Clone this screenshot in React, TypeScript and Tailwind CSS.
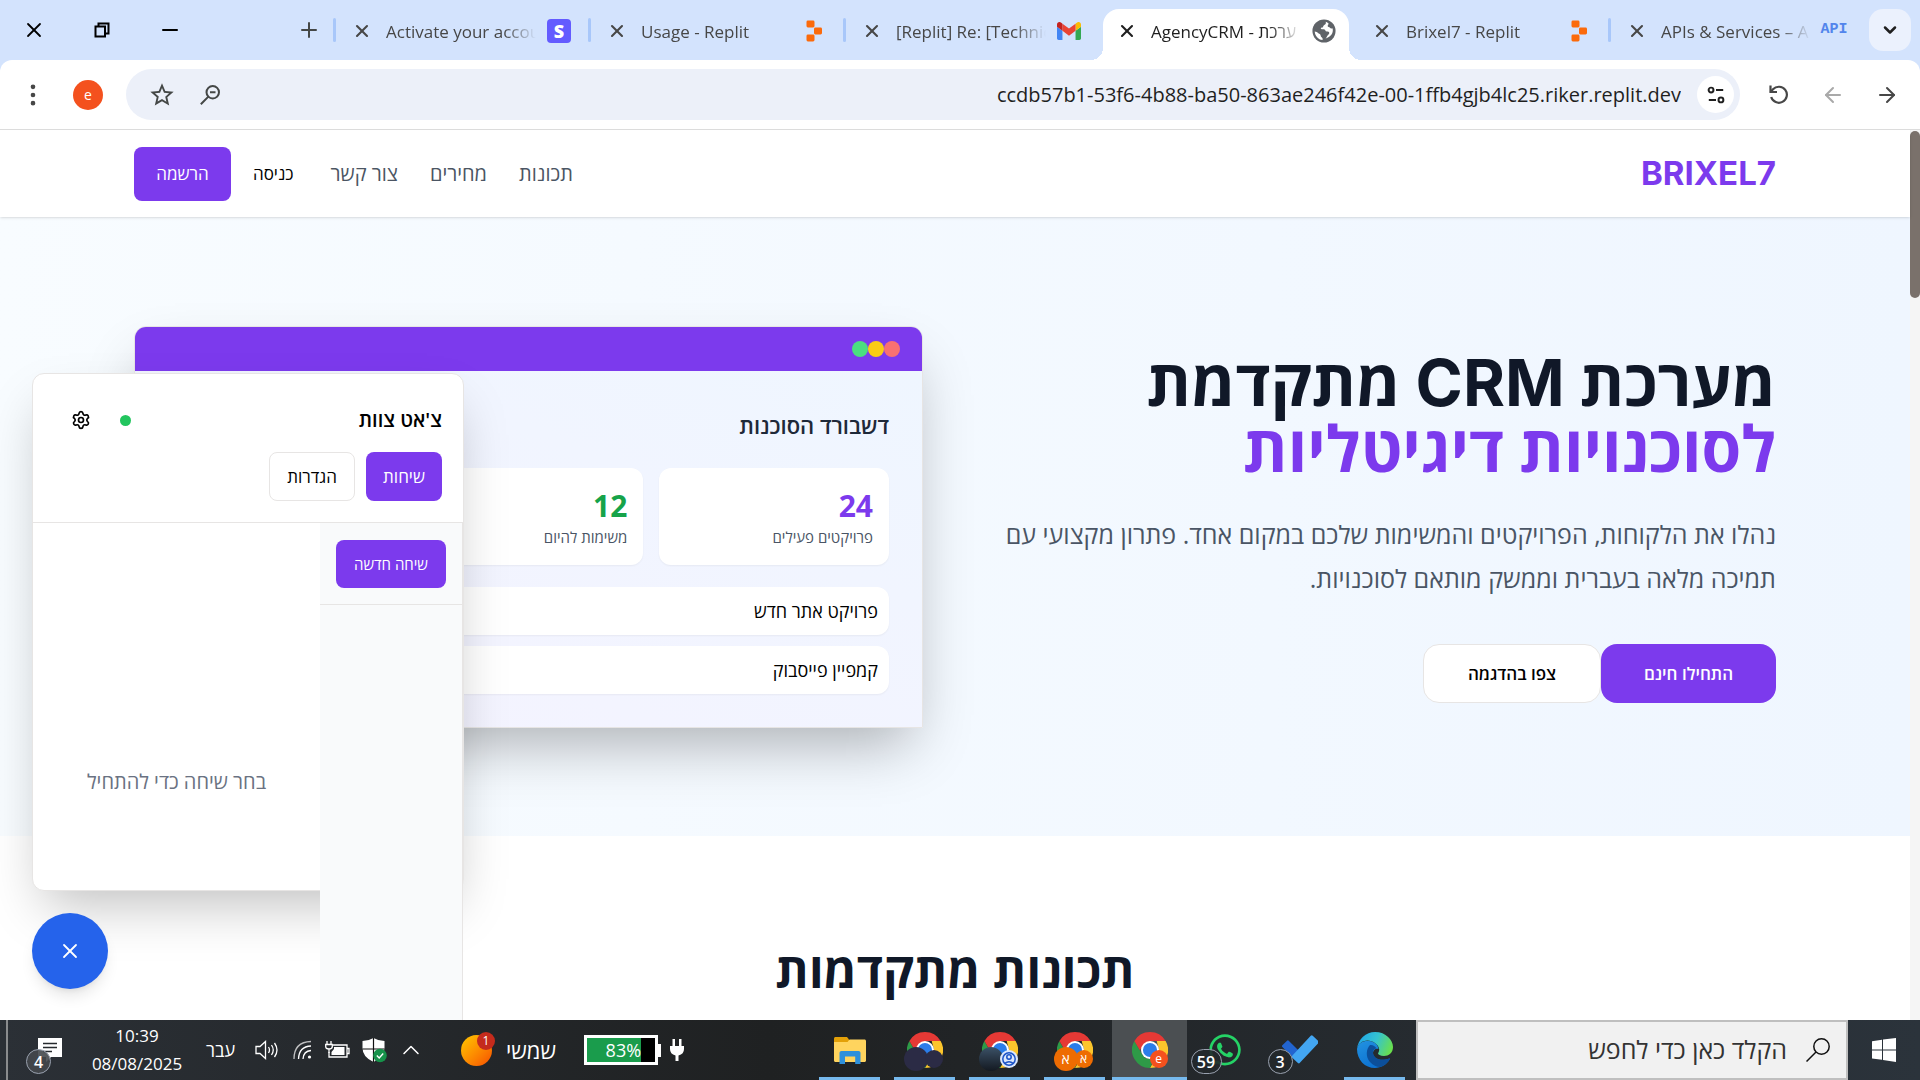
import React from "react";
import { ArrowLeft, ArrowRight, ChevronDown, ChevronUp, Minus, MoreVertical, Plus, Settings, X } from "lucide-react";
import { FaWhatsapp } from "react-icons/fa";

type IconProps = { className?: string };

function ReplitIcon({ className }: IconProps) {
  return (
    <svg viewBox="0 0 16 22" className={className} fill="#fb6a0b" aria-hidden="true">
      <rect x="0.5" y="0.5" width="8" height="7" rx="1.4" />
      <rect x="8" y="7.5" width="8" height="7" rx="1.4" />
      <rect x="0.5" y="14.5" width="8" height="7" rx="1.4" />
    </svg>
  );
}

function GmailIcon({ className }: IconProps) {
  return (
    <svg viewBox="52 42 88 66" className={className} aria-hidden="true">
      <path fill="#4285f4" d="M58 108h14V74L52 59v43c0 3.32 2.69 6 6 6" />
      <path fill="#34a853" d="M120 108h14c3.32 0 6-2.69 6-6V59l-20 15" />
      <path fill="#fbbc04" d="M120 48v26l20-15v-8c0-7.42-8.47-11.65-14.4-7.2" />
      <path fill="#ea4335" d="M72 74V48l24 18 24-18v26L96 92" />
      <path fill="#c5221f" d="M52 51v8l20 15V48l-5.6-4.2c-5.94-4.45-14.4-.22-14.4 7.2" />
    </svg>
  );
}

function GlobeIcon({ className }: IconProps) {
  return (
    <svg viewBox="0 0 22 22" className={className} aria-hidden="true">
      <circle cx="11" cy="11" r="10.6" fill="#5f6368" />
      <path fill="#fff" d="M12.6 2.6c.4 1.6-.2 2.6-1.6 3.1-.9.4-.4 1.6-1.4 2-.8.3-1.7.1-1.5 1 .2.9 1.4.6 2.5.6 1.7 0 1.4 2 3 2.2 1.2.1 2 .1 2.2 1.2.2 1-.8 1.6-1.5 2.4-.9 1-.7 2.1-1.9 2.7 3.6-.6 6.7-3.6 6.7-7.4 0-.7-.1-1.3-.3-1.9-.9.4-2 .2-2.5-.6-.4-.7-1.7-.3-1.9-1.2-.2-1.2.9-1.7.8-2.6-.7-.7-1.6-1.2-2.6-1.5zM2.5 11.4c.3 4.2 3.2 7.3 7.2 7.9.2-1.2-.1-2-.9-2.5-.9-.5-.7-1.7-1.2-2.6-.5-.8-1.4-.7-2-1.4-.6-.8-1.8-1.2-3.1-1.4z" />
    </svg>
  );
}

function TuneIcon({ className }: IconProps) {
  return (
    <svg viewBox="0 0 20 22" className={className} fill="none" stroke="#1f1f1f" strokeWidth="2.2" aria-hidden="true">
      <circle cx="4.5" cy="5.5" r="2.7" />
      <path d="M10 5.5h8M2 16.5h8" />
      <circle cx="15.5" cy="16.5" r="2.7" />
    </svg>
  );
}

function StarIcon({ className }: IconProps) {
  return (
    <svg viewBox="0 0 24 24" className={className} fill="#444746" aria-hidden="true">
      <path d="M22 9.24l-7.19-.62L12 2 9.19 8.63 2 9.24l5.46 4.73L5.82 21 12 17.27 18.18 21l-1.63-7.03L22 9.24zM12 15.4l-3.76 2.27 1-4.28-3.32-2.88 4.38-.38L12 6.1l1.71 4.04 4.38.38-3.32 2.88 1 4.28L12 15.4z" />
    </svg>
  );
}

function ZoomOutIcon({ className }: IconProps) {
  return (
    <svg viewBox="0 0 24 24" className={className} fill="none" stroke="#444746" strokeWidth="2.2" aria-hidden="true">
      <circle cx="15" cy="9" r="6.8" />
      <path d="M10.2 13.8L2 22M12 9h6" />
    </svg>
  );
}

function ReloadIcon({ className }: IconProps) {
  return (
    <svg viewBox="0 0 24 24" className={className} fill="none" stroke="#474747" strokeWidth="2.2" aria-hidden="true">
      <path d="M4.2 14a8 8 0 1 0 1.8-7.7L3.5 9" />
      <path d="M3.5 2.5V9H10" />
    </svg>
  );
}

function SearchIcon({ className }: IconProps) {
  return (
    <svg viewBox="0 0 24 24" className={className} fill="none" stroke="#111" strokeWidth="1.5" aria-hidden="true">
      <circle cx="15.5" cy="8.5" r="7.7" />
      <path d="M10 14L.5 23.5" />
    </svg>
  );
}

function RestoreIcon({ className }: IconProps) {
  return (
    <svg viewBox="0 0 16 16" className={className} fill="none" stroke="#000" strokeWidth="2" aria-hidden="true">
      <path d="M1.5 4.5h9.5v10H1.5zM4.5 4V1.5h10v10H12" />
    </svg>
  );
}

function ChromeIcon({ className }: IconProps) {
  return (
    <svg viewBox="0 0 48 48" className={className} aria-hidden="true">
      <path fill="#e53935" d="M24 0a24 24 0 0 1 20.8 12H24a12 12 0 0 0-10.4 6L3.2 12A24 24 0 0 1 24 0z" />
      <path fill="#fcc52c" d="M44.8 12A24 24 0 0 1 24 48l10.4-18A12 12 0 0 0 34.4 18L33 12z" />
      <path fill="#2e9a47" d="M3.2 12l10.4 18A12 12 0 0 0 24 36c2 0 4-.4 5.8-1.4L24 48A24 24 0 0 1 3.2 12z" />
      <path fill="#e53935" d="M3.2 12l7 12 14-12z" />
      <circle cx="24" cy="24" r="12" fill="#fff" />
      <circle cx="24" cy="24" r="9.4" fill="#2b7de9" />
    </svg>
  );
}

function EdgeIcon({ className }: IconProps) {
  return (
    <svg viewBox="0 0 36 36" className={className} aria-hidden="true">
      <defs>
        <linearGradient id="edgeTop" x1="0" y1="0.3" x2="1" y2="0.6">
          <stop offset="0" stopColor="#1fa5e8" />
          <stop offset="0.5" stopColor="#35c3cf" />
          <stop offset="1" stopColor="#6ae04b" />
        </linearGradient>
        <linearGradient id="edgeLow" x1="0" y1="0" x2="0.6" y2="1">
          <stop offset="0" stopColor="#2292e0" />
          <stop offset="1" stopColor="#0b6fd0" />
        </linearGradient>
      </defs>
      <path fill="url(#edgeLow)" d="M0 17C1 11 6 8.5 12 9c6 .5 9 4 9.5 8-2-1-5 0-5.5 3.5C15.5 26 22 30 33 26.5 30 32.5 24 36 18 36 8 36 0 28 0 17z" />
      <path fill="#0c4f9a" d="M13 13c-4 4-4.5 12 0 17 4 4.5 9 5.5 12 4.6 3-1.4 6-4 8-7.6.2-.8-.4-1-1-.6-7 3.3-15.5.6-16-5.9 0-3 2-4 3.5-4.3C18 14 15.5 12.5 13 13z" />
      <path fill="url(#edgeTop)" d="M0 17C1 7 9 0 18 0c11 0 18 8 18 15 0 6-4.5 9-9 9-4 0-6-1.4-6-2.4 0-.8 1.2-1.6 1.2-4.1C22 12.5 16 8.5 10.5 8.5 5 8.5 1 12 0 17z" />
    </svg>
  );
}

function FolderIcon({ className }: IconProps) {
  return (
    <svg viewBox="0 0 32 27" className={className} aria-hidden="true">
      <path fill="#e3a008" d="M0 1.5C0 .7.7 0 1.5 0H13l2 2.5V7H0z" />
      <path fill="#ffd45e" d="M0 5h13.5l2-2.5h15c.8 0 1.5.7 1.5 1.5v19.5c0 .8-.7 1.5-1.5 1.5h-29C.7 25 0 24.3 0 23.5z" />
      <path fill="#2e90db" d="M7.5 14h17c1.2 0 2 .9 2 2v11h-5.3v-7.5H11V27H5.5V16c0-1.1.8-2 2-2z" />
    </svg>
  );
}

function TodoIcon({ className }: IconProps) {
  return (
    <svg viewBox="0 0 36 30" className={className} aria-hidden="true">
      <rect x="-4" y="-8" width="9" height="17" rx="1.2" transform="translate(8 14) rotate(-45)" fill="#2264cf" />
      <rect x="-5.5" y="-15" width="10.5" height="30" rx="1.4" transform="translate(23.5 14.5) rotate(43)" fill="#43a6f2" />
    </svg>
  );
}

function WindowsIcon({ className }: IconProps) {
  return (
    <svg viewBox="0 0 24 24" className={className} fill="#fff" aria-hidden="true">
      <path d="M0 3.2l10-1.5v9.8H0zM11 1.5L24 0v11.5H11zM0 12.5h10v9.3L0 20.5zM11 12.5h13V24l-13-1.9z" />
    </svg>
  );
}

function NoteIcon({ className }: IconProps) {
  return (
    <svg viewBox="0 0 24 24" className={className} aria-hidden="true">
      <path fill="#fff" d="M0 0h24v19H13l-5 5v-5H0z" />
      <path stroke="#262a2e" strokeWidth="1.4" d="M5 5.5h14M5 9.5h14M5 13.5h9" />
    </svg>
  );
}

function SpeakerIcon({ className }: IconProps) {
  return (
    <svg viewBox="0 0 24 20" className={className} fill="none" stroke="#fff" strokeWidth="1.3" aria-hidden="true">
      <path d="M1 6.5h4L10.5 1.5v17L5 13.5H1z" />
      <path d="M13.5 7q2 3 0 6M16.5 5q3.5 5 0 10M19.5 3q5 7 0 14" />
    </svg>
  );
}

function WifiIcon({ className }: IconProps) {
  return (
    <svg viewBox="0 0 20 20" className={className} fill="none" stroke="#fff" strokeWidth="1.3" aria-hidden="true">
      <path d="M1 19Q1 2 18 1.5" opacity="0.7" />
      <path d="M5.5 19Q6 6.5 18 6M10 19q.5-8 8-8.5" />
      <circle cx="16.5" cy="17" r="1.6" fill="#fff" stroke="none" />
    </svg>
  );
}

function ChargingIcon({ className }: IconProps) {
  return (
    <svg viewBox="0 0 25 18" className={className} fill="none" stroke="#fff" strokeWidth="1.3" aria-hidden="true">
      <path d="M8 4h14v12H4v-5M22.5 7.5H24v5h-1.5" />
      <path fill="#fff" d="M9 6h10.5v8H6.5v-3L9 8z" stroke="none" />
      <path d="M2 0v3M6 0v3M.7 3.5h6.6v2q0 2.5-3.3 2.5T.7 5.5zM4 8v4" />
    </svg>
  );
}

function ShieldIcon({ className }: IconProps) {
  return (
    <svg viewBox="0 0 25 25" className={className} aria-hidden="true">
      <path fill="#fff" d="M11.5 0q5 3 11 3v7q0 9-11 14Q.5 19 .5 10V3q6 0 11-3z" />
      <path stroke="#111" strokeWidth="1.2" d="M11.5 0v24M.5 11h22" />
      <circle cx="18" cy="17.5" r="6.8" fill="#16924a" />
      <path d="M14.8 17.5l2.4 2.4 4-4.4" fill="none" stroke="#fff" strokeWidth="1.4" />
    </svg>
  );
}

function PlugIcon({ className }: IconProps) {
  return (
    <svg viewBox="0 0 14 22" className={className} fill="#fff" aria-hidden="true">
      <path d="M2.5 0h2.5v7h4V0h2.5v7H14v3q0 5-5.5 6.5V22h-3v-5.5Q0 15 0 10V7h2.5z" />
    </svg>
  );
}

type TabInfo = { title: string; icon: React.ReactNode; active?: boolean; divider: boolean };

const tabs: TabInfo[] = [
  { title: "Activate your accou", icon: <span className="flex size-6 shrink-0 items-center justify-center rounded-sm bg-[#635bff] text-lg font-extrabold text-white">S</span>, divider: true },
  { title: "Usage - Replit", icon: <ReplitIcon className="h-[22px] w-4" />, divider: true },
  { title: "[Replit] Re: [Technic", icon: <GmailIcon className="w-6" />, divider: true },
  { title: "AgencyCRM - ערכת", icon: <GlobeIcon className="size-6" />, active: true, divider: false },
  { title: "Brixel7 - Replit", icon: <ReplitIcon className="h-[22px] w-4" />, divider: false },
  { title: "APIs & Services – A", icon: <span className="font-['Liberation_Mono'] text-[15px] font-bold text-[#5285ec]">API</span>, divider: true },
];

function TabStrip() {
  return (
    <header className="flex h-[60px] shrink-0 bg-[#d3e3fd]">
      <div className="flex w-[333px] shrink-0 items-center">
        <button aria-label="Close window" className="flex w-[68px] justify-center"><X className="size-6 text-black" strokeWidth={1.8} /></button>
        <button aria-label="Restore window" className="flex w-[68px] justify-center"><RestoreIcon className="size-4" /></button>
        <button aria-label="Minimize window" className="flex w-[68px] justify-center"><Minus className="size-6 text-black" /></button>
        <button aria-label="New tab" className="mr-3 ml-auto"><Plus className="size-6 text-[#444746]" /></button>
      </div>
      <div className="flex min-w-0 flex-1">
        {tabs.map((tab) => (
          <div key={tab.title} className="flex min-w-0 flex-1 items-center">
            <span className={tab.divider ? "h-6 w-[3px] rounded bg-[#a8c7fa]" : "w-[3px]"} />
            <div
              className={
                tab.active
                  ? "relative mr-1 ml-0.5 flex h-[51px] min-w-0 flex-1 items-center self-end rounded-t-2xl bg-white pr-[13px] pl-3.5 text-[#1f1f1f] before:absolute before:bottom-0 before:-left-3 before:size-3 before:bg-[radial-gradient(circle_at_0_0,transparent_12px,white_12px)] after:absolute after:-right-3 after:bottom-0 after:size-3 after:bg-[radial-gradient(circle_at_100%_0,transparent_12px,white_12px)]"
                  : "mr-1 ml-0.5 flex h-[51px] min-w-0 flex-1 items-center self-end pr-[13px] pl-3.5 text-[#474747]"
              }
            >
              <button aria-label={"Close " + tab.title} className="mb-2"><X className="size-5" strokeWidth={2.5} /></button>
              <button className="mb-1.5 ml-3.5 min-w-0 flex-1 overflow-hidden text-left text-[17px] whitespace-nowrap [mask-image:linear-gradient(to_right,black_118px,transparent_150px)]">
                {tab.title}
              </button>
              <span className="mb-2 ml-2.5 flex w-6 shrink-0 justify-center">{tab.icon}</span>
            </div>
          </div>
        ))}
      </div>
      <div className="flex w-[57px] shrink-0 items-center pl-1.5">
        <button aria-label="Search tabs" className="flex size-[42px] items-center justify-center rounded-[14px] bg-[#ebf1fd]">
          <ChevronDown className="size-5 text-[#1f1f1f]" strokeWidth={3} />
        </button>
      </div>
    </header>
  );
}

function AddressBar() {
  return (
    <div className="bg-[#d3e3fd]">
      <div className="flex h-[70px] shrink-0 items-center rounded-t-xl border-b border-[#dcdcdc] bg-white">
        <button aria-label="Menu" className="flex w-[66px] justify-center"><MoreVertical className="size-7 text-[#474747]" fill="currentColor" /></button>
        <button aria-label="Profile" className="ml-[7px] flex size-[30px] items-center justify-center rounded-full bg-[#f4511e] text-sm text-white">e</button>
        <div className="ml-[23px] flex h-[51px] min-w-0 flex-1 items-center rounded-full bg-[#ecf0f9] pr-1.5 pl-[22px]">
          <button aria-label="Bookmark"><StarIcon className="size-7" /></button>
          <button aria-label="Zoom" className="ml-[23px]"><ZoomOutIcon className="size-[22px]" /></button>
          <input
            aria-label="Address"
            className="min-w-0 flex-1 bg-transparent pr-4 text-right text-xl text-[#1f1f1f] outline-none"
            defaultValue="ccdb57b1-53f6-4b88-ba50-863ae246f42e-00-1ffb4gjb4lc25.riker.replit.dev"
          />
          <button aria-label="Site information" className="flex size-[37px] items-center justify-center rounded-full bg-white"><TuneIcon className="h-5 w-[18px]" /></button>
        </div>
        <div className="flex w-[180px] shrink-0 items-center pl-[27px]">
          <button aria-label="Reload"><ReloadIcon className="size-6" /></button>
          <button aria-label="Forward" className="ml-[30px]"><ArrowLeft className="size-6 text-[#a9a9a9]" /></button>
          <button aria-label="Back" className="ml-[30px]"><ArrowRight className="size-6 text-[#474747]" /></button>
        </div>
      </div>
    </div>
  );
}

function SiteNav() {
  return (
    <nav className="relative flex h-[87px] shrink-0 items-center justify-between bg-white px-[134px] shadow-sm">
      <a href="#home" className="font-['Inter','Open_Sans',sans-serif] text-[33px] font-bold text-[#7c3aed]">BRIXEL7</a>
      <div className="flex items-center text-xl text-[#4b5563]">
        <a href="#features">תכונות</a>
        <a href="#pricing" className="mr-8">מחירים</a>
        <a href="#contact" className="mr-8">צור קשר</a>
        <a href="#login" className="mr-[37px] text-[17px] font-medium text-black">כניסה</a>
        <button className="mr-[22px] h-[54px] w-[97px] rounded-lg bg-[#7c3aed] text-[17px] font-medium text-white">הרשמה</button>
      </div>
    </nav>
  );
}

const stats = [
  { value: "24", label: "פרויקטים פעילים", tone: "text-[#7c3aed]" },
  { value: "12", label: "משימות להיום", tone: "text-[#16a34a]" },
  { value: "8", label: "לקוחות חדשים", tone: "text-[#2563eb]" },
];

function Dashboard() {
  return (
    <div className="rounded-t-xl border border-stone-200 shadow-[0_28px_56px_-13px_rgba(0,0,0,0.3)]">
      <div className="flex h-11 items-center rounded-t-[11px] bg-[#7c3aed] pr-[22px]">
        <span className="size-4 rounded-full bg-[#f87171]" />
        <span className="size-4 rounded-full bg-[#facc15]" />
        <span className="size-4 rounded-full bg-[#4ade80]" />
      </div>
      <div className="bg-linear-to-bl from-[#eff6ff] to-[#f5f3ff] p-[33px]">
        <h2 className="mb-[22px] text-[22px] leading-[42px] font-semibold text-gray-800">דשבורד הסוכנות</h2>
        <div className="grid grid-cols-3 gap-4">
          {stats.map((s) => (
            <div key={s.label} className="h-[97px] rounded-xl bg-white px-4 pt-5 shadow-[0_1px_2px_rgba(0,0,0,0.05)]">
              <div className={s.tone + " text-3xl leading-9 font-bold"}>{s.value}</div>
              <div className="text-[15px] leading-[26px] text-gray-600">{s.label}</div>
            </div>
          ))}
        </div>
        <ul className="mt-[22px] flex flex-col gap-[11px]">
          <li className="flex h-12 items-center rounded-xl bg-white px-[11px] text-lg text-black shadow-[0_1px_2px_rgba(0,0,0,0.05)]">פרויקט אתר חדש</li>
          <li className="flex h-12 items-center rounded-xl bg-white px-[11px] text-lg text-black shadow-[0_1px_2px_rgba(0,0,0,0.05)]">קמפיין פייסבוק</li>
        </ul>
      </div>
    </div>
  );
}

function Hero() {
  return (
    <section className="grid h-[619px] shrink-0 grid-cols-2 items-center gap-16 bg-linear-to-l from-[#eff6ff] to-[#f8fcff] px-[134px]">
      <div>
        <h1 className="font-['Inter','Open_Sans',sans-serif] text-[64px] leading-[66px] font-bold text-gray-900">
          <span className="block">מערכת CRM מתקדמת</span>
          <span className="block text-[#7c3aed]">לסוכנויות דיגיטליות</span>
        </h1>
        <p className="mt-[30px] text-[25px] leading-11 text-gray-600">
          נהלו את הלקוחות, הפרויקטים והמשימות שלכם במקום אחד. פתרון מקצועי עם תמיכה מלאה בעברית וממשק מותאם לסוכנויות.
        </p>
        <div className="mt-11 flex">
          <button className="h-[59px] w-[175px] rounded-2xl bg-[#7c3aed] text-[17px] font-semibold text-white">התחילו חינם</button>
          <button className="h-[59px] w-[178px] rounded-2xl border border-stone-200 bg-white text-[17px] font-semibold text-black">צפו בהדגמה</button>
        </div>
      </div>
      <Dashboard />
    </section>
  );
}

function ChatWidget() {
  return (
    <>
      <aside className="absolute top-[243px] left-8 flex h-[518px] w-[432px] flex-col rounded-xl border border-stone-200 bg-white shadow-2xl">
        <div className="h-[149px] shrink-0 border-b border-stone-200 px-[21px] pt-7">
          <div className="flex items-center">
            <h3 className="text-xl leading-9 font-semibold text-black">צ'אט צוות</h3>
            <span className="mr-auto size-[11px] rounded-full bg-[#22c55e]" />
            <button aria-label="הגדרות צ'אט" className="mr-7 ml-4 flex w-[22px] justify-center"><Settings className="size-5 text-black" /></button>
          </div>
          <div className="mt-3.5 flex gap-[11px]">
            <button className="h-[49px] w-[76px] rounded-lg bg-[#7c3aed] text-[17px] font-medium text-white">שיחות</button>
            <button className="h-[49px] w-[86px] rounded-lg border border-stone-200 bg-white text-[17px] text-black">הגדרות</button>
          </div>
        </div>
        <div className="flex min-h-0 flex-1">
          <div className="h-[550px] w-[143px] shrink-0 border-r border-stone-200 bg-gray-50">
            <div className="border-b border-stone-200 px-4 pt-[17px] pb-4">
              <button className="h-12 w-full rounded-lg bg-[#7c3aed] text-[15px] font-medium text-white">שיחה חדשה</button>
            </div>
          </div>
          <div className="flex flex-1 items-center justify-center pt-[150px]">
            <p className="text-xl text-gray-500">בחר שיחה כדי להתחיל</p>
          </div>
        </div>
      </aside>
      <button aria-label="סגור צ'אט" className="absolute top-[783px] left-8 flex size-[76px] items-center justify-center rounded-full bg-[#2563eb] shadow-lg">
        <X className="size-6 text-white" strokeWidth={1.8} />
      </button>
    </>
  );
}

function Page() {
  return (
    <div className="relative flex min-h-0 flex-1 overflow-hidden bg-white">
      <main dir="rtl" className="flex min-w-0 flex-1 flex-col">
        <SiteNav />
        <Hero />
        <section className="flex flex-1 justify-center pt-[104px]">
          <h2 className="text-5xl leading-[60px] font-bold text-gray-900">תכונות מתקדמות</h2>
        </section>
        <ChatWidget />
      </main>
      <div className="w-2.5 shrink-0 bg-[#f5f5f5]"><div className="mt-px h-[167px] rounded-full bg-[#7a716b]" /></div>
    </div>
  );
}

function TaskSlot({ label, open, active, children }: { label: string; open?: boolean; active?: boolean; children: React.ReactNode }) {
  return (
    <button aria-label={label} className={active ? "relative flex h-full w-[75px] items-center justify-center bg-[#4b4f52]" : "relative flex h-full w-[75px] items-center justify-center"}>
      <span className="relative">{children}</span>
      {open && <span className={active ? "absolute inset-x-0 bottom-0 h-[3px] bg-[#76b9ed]" : "absolute inset-x-[7px] bottom-0 h-[3px] bg-[#76b9ed]"} />}
    </button>
  );
}

function Taskbar() {
  return (
    <footer className="flex h-[60px] shrink-0 items-center bg-linear-to-r from-[#2b3036] via-[#1f2122] via-40% to-[#2b333b] text-white">
      <span className="ml-1.5 h-full w-0.5 bg-[#8a8c8e]" />
      <button aria-label="Notifications" className="relative ml-[30px]">
        <NoteIcon className="size-6" />
        <span className="absolute top-[11px] -left-3 flex size-[25px] items-center justify-center rounded-full border border-gray-400 bg-[#44484c]/90 text-base font-semibold">4</span>
      </button>
      <div className="ml-[22px] w-[106px] text-center text-[17px] leading-7"><div>10:39</div><div>08/08/2025</div></div>
      <span className="ml-4 text-lg">עבר</span>
      <SpeakerIcon className="ml-5 h-5 w-6" />
      <WifiIcon className="ml-3.5 size-5" />
      <ChargingIcon className="ml-3 h-[18px] w-[25px]" />
      <ShieldIcon className="ml-3 size-[25px]" />
      <ChevronUp className="ml-2.5 size-7" strokeWidth={1.3} />
      <button className="ml-9 flex items-center">
        <span className="relative size-[31px] rounded-full bg-linear-to-br from-yellow-400 to-orange-600">
          <span className="absolute -top-[3px] -right-[3px] flex size-[18px] items-center justify-center rounded-full bg-[#c42b1c] text-xs">1</span>
        </span>
        <span className="ml-3.5 text-[22px] leading-7">שמשי</span>
      </button>
      <div className="ml-7 flex items-center">
        <div className="flex h-[30px] w-[74px] border-[3px] border-white bg-black">
          <div className="flex w-[54px] items-center justify-end bg-[#1a9c4c] text-lg leading-6">83%</div>
        </div>
        <span className="h-[13px] w-[3px] bg-white" />
        <PlugIcon className="ml-[9px] h-[22px] w-3.5" />
      </div>
      <div className="ml-auto flex h-full">
        <TaskSlot label="File Explorer" open><FolderIcon className="h-[27px] w-8" /></TaskSlot>
        <TaskSlot label="Chrome, first profile" open>
          <ChromeIcon className="size-9" />
          <span className="absolute top-[15px] -left-[3px] size-6 rounded-full bg-[#2b2b45]" />
          <span className="absolute top-[18px] left-[18px] size-[18px] rounded-full bg-[#2b2b45]" />
        </TaskSlot>
        <TaskSlot label="Chrome, second profile" open>
          <ChromeIcon className="size-9" />
          <span className="absolute top-[15px] -left-[3px] size-6 rounded-full bg-linear-to-b from-[#3c5268] to-[#141a22]" />
          <svg viewBox="0 0 18 18" className="absolute top-[18px] left-[18px] size-[18px]" fill="none" stroke="#1c54c8" strokeWidth="1.5" aria-hidden="true">
            <circle cx="9" cy="9" r="9" fill="#dbe7fd" stroke="none" />
            <circle cx="9" cy="9" r="6.2" />
            <circle cx="9" cy="7" r="2.2" />
            <path d="M4.800 13.400q4.200-3.400 8.400 0" />
          </svg>
        </TaskSlot>
        <TaskSlot label="Chrome, third profile" open>
          <ChromeIcon className="size-9" />
          <span className="absolute top-[15px] -left-[3px] flex size-6 items-center justify-center rounded-full bg-[#ee6c02] text-sm text-white">א</span>
          <span className="absolute top-[18px] left-[18px] flex size-[18px] items-center justify-center rounded-full bg-[#ee6c02] text-xs text-white">א</span>
        </TaskSlot>
        <TaskSlot label="Chrome, current profile" open active>
          <ChromeIcon className="size-9" />
          <span className="absolute top-[18px] left-[18px] flex size-[18px] items-center justify-center rounded-full bg-[#f4511e] text-xs text-white">e</span>
        </TaskSlot>
        <TaskSlot label="WhatsApp">
          <FaWhatsapp className="size-9 text-[#25d366]" />
          <span className="absolute top-[17px] -left-4 flex h-[25px] w-[31px] items-center justify-center rounded-full border border-gray-400 bg-[#24282b]/90 text-base font-semibold">59</span>
        </TaskSlot>
        <TaskSlot label="To Do">
          <TodoIcon className="h-[30px] w-9" />
          <span className="absolute top-3.5 -left-3.5 flex size-[25px] items-center justify-center rounded-full border border-gray-400 bg-[#24282b]/90 text-base font-semibold">3</span>
        </TaskSlot>
        <TaskSlot label="Edge" open><EdgeIcon className="size-9" /></TaskSlot>
      </div>
      <label dir="rtl" className="ml-1 flex h-full w-[432px] items-center border-2 border-[#bfbfbf] bg-[#f1f1f1] pr-4">
        <SearchIcon className="size-6" />
        <input aria-label="חיפוש" placeholder="הקלד כאן כדי לחפש" className="mr-[19px] min-w-0 flex-1 bg-transparent text-[25px] text-black outline-none placeholder:text-[#333]" />
      </label>
      <button aria-label="Start" className="flex w-[72px] justify-center"><WindowsIcon className="size-6" /></button>
    </footer>
  );
}

export default function App() {
  return (
    <div className="flex h-screen w-full flex-col overflow-hidden font-['Open_Sans','Noto_Sans',sans-serif]">
      <TabStrip />
      <AddressBar />
      <Page />
      <Taskbar />
    </div>
  );
}
